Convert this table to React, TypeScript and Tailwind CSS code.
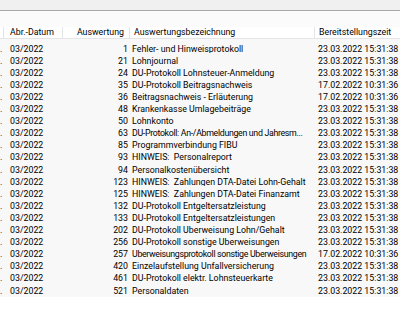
import React from "react";

const rows: [string, string, string][] = [
  ["1", "Fehler- und Hinweisprotokoll", "23.03.2022 15:31:38"],
  ["21", "Lohnjournal", "23.03.2022 15:31:38"],
  ["24", "DÜ-Protokoll Lohnsteuer-Anmeldung", "23.03.2022 15:31:38"],
  ["35", "DÜ-Protokoll Beitragsnachweis", "17.02.2022 10:31:36"],
  ["36", "Beitragsnachweis - Erläuterung", "17.02.2022 10:31:36"],
  ["48", "Krankenkasse Umlagebeiträge", "23.03.2022 15:31:38"],
  ["50", "Lohnkonto", "23.03.2022 15:31:38"],
  ["63", "DÜ-Protokoll: An-/Abmeldungen und Jahresm...", "23.03.2022 15:31:38"],
  ["85", "Programmverbindung FIBU", "23.03.2022 15:31:38"],
  ["93", "HINWEIS:  Personalreport", "23.03.2022 15:31:38"],
  ["94", "Personalkostenübersicht", "23.03.2022 15:31:38"],
  ["123", "HINWEIS:  Zahlungen DTA-Datei Lohn-Gehalt", "23.03.2022 15:31:38"],
  ["125", "HINWEIS:  Zahlungen DTA-Datei Finanzamt", "23.03.2022 15:31:38"],
  ["132", "DÜ-Protokoll Entgeltersatzleistung", "23.03.2022 15:31:38"],
  ["133", "DÜ-Protokoll Entgeltersatzleistungen", "23.03.2022 15:31:38"],
  ["202", "DÜ-Protokoll Überweisung Lohn/Gehalt", "23.03.2022 15:31:38"],
  ["256", "DÜ-Protokoll sonstige Überweisungen", "23.03.2022 15:31:38"],
  ["257", "Überweisungsprotokoll sonstige Überweisungen", "17.02.2022 10:31:36"],
  ["420", "Einzelaufstellung Unfallversicherung", "23.03.2022 15:31:38"],
  ["461", "DÜ-Protokoll elektr. Lohnsteuerkarte", "23.03.2022 15:31:38"],
  ["521", "Personaldaten", "23.03.2022 15:31:38"],
];

export default function App() {
  return (
    <div
      className="w-[400px] h-[313px] overflow-hidden bg-white text-black text-[8.8px] leading-none"
      style={{ fontFamily: 'Roboto, sans-serif' }}
    >
      <div className="h-[10px] bg-[#f0f0f0]" />
      <div className="h-px bg-[#a8a8a8]" />
      <div className="h-[16px] bg-[#fbfbfb]" />
      <div className="flex h-[12px] bg-white border-b border-[#e5e5e5] whitespace-nowrap">
        <div className="w-[4px] shrink-0 border-r border-[#e5e5e5]" />
        <div className="w-[59px] shrink-0 border-r border-[#e5e5e5] pl-[6px] flex items-center">Abr.-Datum</div>
        <div className="w-[67px] shrink-0 border-r border-[#e5e5e5] pr-[5px] flex items-center justify-end">Auswertung</div>
        <div className="w-[185px] shrink-0 border-r border-[#e5e5e5] pl-[4px] flex items-center">Auswertungsbezeichnung</div>
        <div className="flex-1 pl-[4px] flex items-center">Bereitstellungszeit</div>
      </div>
      <div className="pt-[4px] bg-[#f8f8f8]">
        {rows.map(([n, d, t], i) => (
          <div key={i} className="flex h-[12.1px] items-center whitespace-pre">
            <div className="w-[4px] shrink-0 overflow-hidden">.</div>
            <div className="w-[59px] shrink-0 pl-[6px]">03/2022</div>
            <div className="w-[67px] shrink-0 pr-[2px] text-right">{n}</div>
            <div
              className={
                d.length > 43
                  ? "w-[185px] shrink-0 pl-[2px] overflow-hidden tracking-[-0.32px]"
                  : "w-[185px] shrink-0 pl-[2px] overflow-hidden"
              }
            >
              {d}
            </div>
            <div className="flex-1 pl-[3px]">{t}</div>
          </div>
        ))}
      </div>
    </div>
  );
}
